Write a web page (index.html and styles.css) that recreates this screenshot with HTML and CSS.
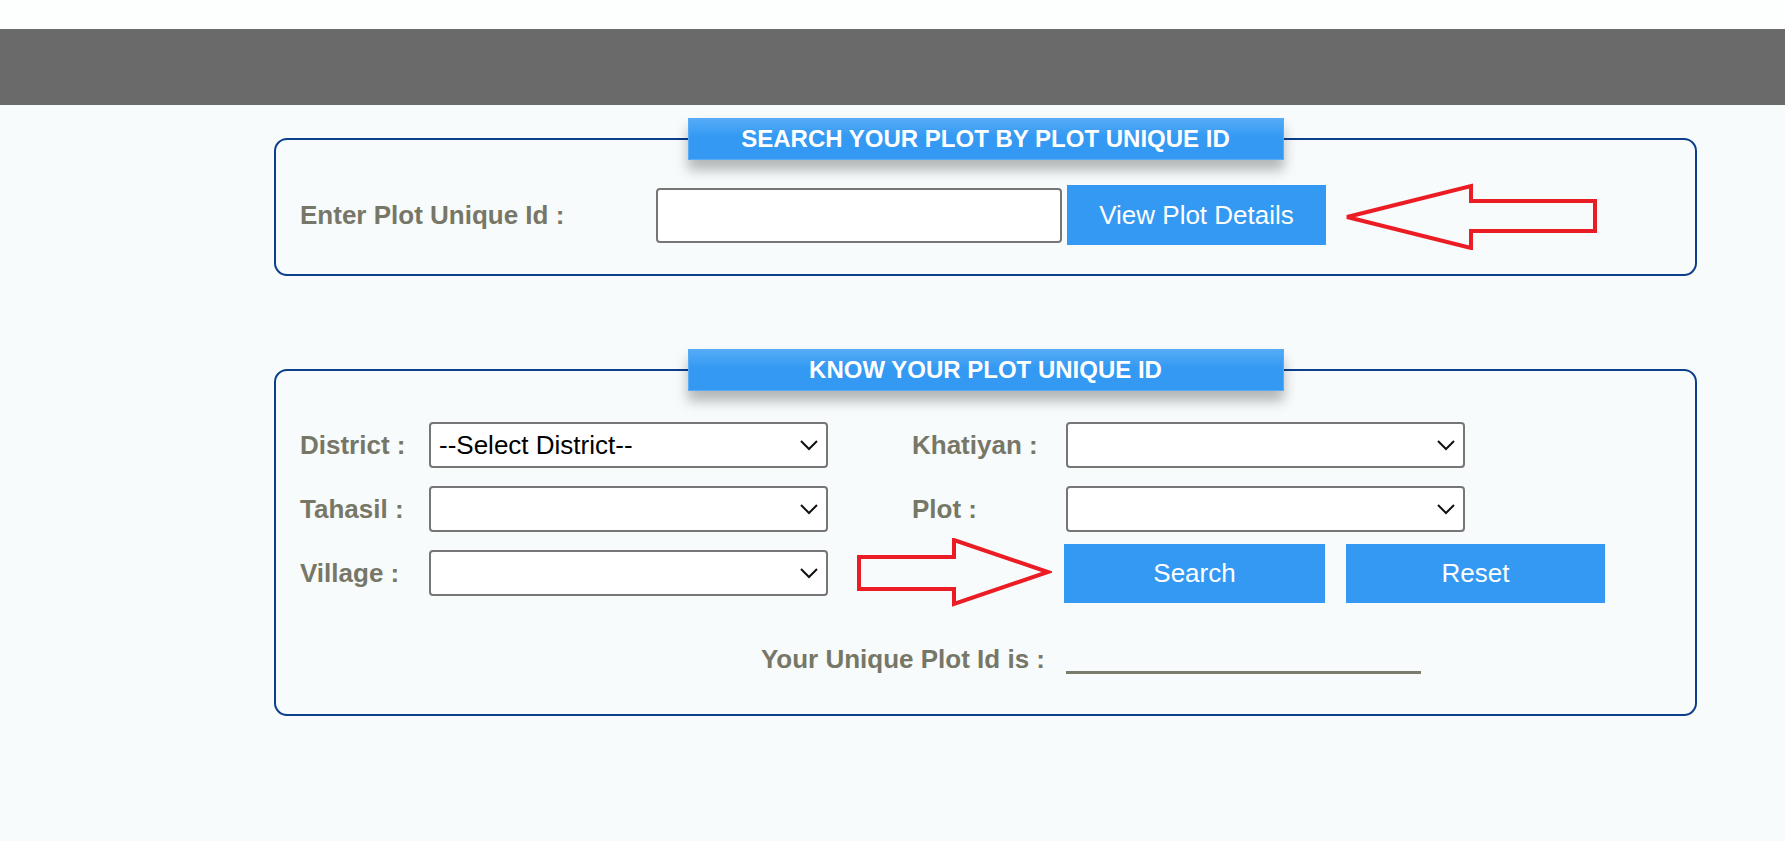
FILE: index.html
```html
<!DOCTYPE html>
<html lang="en">
  <head>
    <meta charset="UTF-8" />
    <meta name="viewport" content="width=device-width, initial-scale=1.0" />
    <title>Plot Unique Id</title>
    <link rel="stylesheet" href="styles.css">
  </head>
  <body>
    <div class="top-strip"></div>
    <div class="header-bar"></div>

    <!-- search by unique id -->
    <fieldset class="panel panel-search">
      <legend>SEARCH YOUR PLOT BY PLOT UNIQUE ID</legend>
      <div class="row">
        <label class="lbl lbl-wide">Enter Plot Unique Id :</label>
        <input type="text" class="txt-id" />
        <button class="btn btn-view">View Plot Details</button>
        <svg class="arrow arrow-left" width="256" height="70" viewBox="0 0 256 70">
          <polygon points="3,37 127,6 127,21 251,21 251,51 127,51 127,68" />
        </svg>
      </div>
    </fieldset>

    <!-- know your id -->
    <fieldset class="panel panel-know">
      <legend>KNOW YOUR PLOT UNIQUE ID</legend>
      <div class="row">
        <label class="lbl">District :</label>
        <span class="sel-wrap">
          <select class="sel"><option>--Select District--</option></select>
          <svg class="chev" width="18" height="11" viewBox="0 0 18 11"><polyline points="1,1 9,9 17,1" /></svg>
        </span>
        <label class="lbl lbl-right">Khatiyan :</label>
        <span class="sel-wrap">
          <select class="sel"><option></option></select>
          <svg class="chev" width="18" height="11" viewBox="0 0 18 11"><polyline points="1,1 9,9 17,1" /></svg>
        </span>
      </div>
      <div class="row row-2">
        <label class="lbl">Tahasil :</label>
        <span class="sel-wrap">
          <select class="sel"><option></option></select>
          <svg class="chev" width="18" height="11" viewBox="0 0 18 11"><polyline points="1,1 9,9 17,1" /></svg>
        </span>
        <label class="lbl lbl-right">Plot :</label>
        <span class="sel-wrap">
          <select class="sel"><option></option></select>
          <svg class="chev" width="18" height="11" viewBox="0 0 18 11"><polyline points="1,1 9,9 17,1" /></svg>
        </span>
      </div>
      <div class="row row-3">
        <label class="lbl">Village :</label>
        <span class="sel-wrap">
          <select class="sel"><option></option></select>
          <svg class="chev" width="18" height="11" viewBox="0 0 18 11"><polyline points="1,1 9,9 17,1" /></svg>
        </span>
        <svg class="arrow arrow-right" width="196" height="70" viewBox="0 0 196 70">
          <polygon points="3,19 98,19 98,2 192,34 98,66 98,51 3,51" />
        </svg>
        <button class="btn btn-search">Search</button>
        <button class="btn btn-reset">Reset</button>
      </div>
      <div class="row row-4">
        <span class="lbl result-lbl">Your Unique Plot Id is :</span>
        <span class="result-line"></span>
      </div>
    </fieldset>
  </body>
</html>
```

FILE: styles.css
```css
body {
  margin: 0;
  background: #f7fbfb;
  font-family: "Liberation Sans", Arial, sans-serif;
}

.top-strip {
  height: 29px;
  background: #fdfefe;
}

.header-bar {
  height: 76px;
  background: #6a6a6a;
}

.panel {
  box-sizing: border-box;
  width: 1423px;
  margin: 13px 0 0 274px;
  padding: 20px 24px 24px 24px;
  border: 2px solid #0b3f8c;
  border-radius: 13px;
  min-width: 0;
}

.panel legend {
  box-sizing: border-box;
  width: 596px;
  height: 42px;
  margin: 0 auto;
  padding: 0;
  border: 1px solid #58acf6;
  background: linear-gradient(#55abf7, #3399f3 45%);
  color: white;
  font-weight: bold;
  font-size: 24px;
  line-height: 40px;
  text-align: center;
  box-shadow: 0 10px 12px rgba(0, 0, 0, 0.28);
}

.panel-know {
  margin-top: 73px;
  padding-top: 31px;
  padding-bottom: 40px;
}

.row {
  display: flex;
  align-items: center;
}

.lbl {
  width: 129px;
  font-size: 26px;
  font-weight: bold;
  color: #777768;
  flex-shrink: 0;
}

.lbl-wide {
  width: 356px;
}

.lbl-right {
  margin-left: 84px;
  width: 154px;
}

.txt-id {
  box-sizing: border-box;
  width: 406px;
  height: 55px;
  border: 2px solid #767676;
  border-radius: 4px;
  background: white;
  font-size: 26px;
}

.btn {
  border: none;
  background: #3399f3;
  color: white;
  font-family: "Liberation Sans", Arial, sans-serif;
  font-size: 26px;
  padding: 0;
  cursor: pointer;
}

.btn-view {
  width: 259px;
  height: 60px;
  margin-left: 5px;
}

.arrow polygon {
  fill: none;
  stroke: #ec1c24;
  stroke-width: 4;
  stroke-linejoin: miter;
}

.arrow-left {
  margin-left: 18px;
}

.sel-wrap {
  position: relative;
  display: block;
  width: 399px;
  height: 46px;
  flex-shrink: 0;
}

.sel {
  box-sizing: border-box;
  width: 100%;
  height: 46px;
  border: 2px solid #767676;
  border-radius: 4px;
  background: white;
  color: black;
  font-family: "Liberation Sans", Arial, sans-serif;
  font-size: 26px;
  padding-left: 8px;
  appearance: none;
  -webkit-appearance: none;
}

.chev {
  position: absolute;
  right: 10px;
  top: 18px;
  pointer-events: none;
}

.chev polyline {
  fill: none;
  stroke: #111;
  stroke-width: 2;
}

.row-2 {
  margin-top: 18px;
}

.row-3 {
  margin-top: 6px;
}

.arrow-right {
  margin-left: 28px;
}

.btn-search {
  width: 261px;
  height: 59px;
  margin-left: 12px;
}

.btn-reset {
  width: 259px;
  height: 59px;
  margin-left: 21px;
}

.row-4 {
  margin-top: 36px;
  height: 30px;
}

.result-lbl {
  width: 745px;
  text-align: right;
  line-height: 30px;
}

.result-line {
  width: 355px;
  height: 30px;
  margin-left: 21px;
  box-sizing: border-box;
  border-bottom: 3px solid #7b7b6b;
}
```
